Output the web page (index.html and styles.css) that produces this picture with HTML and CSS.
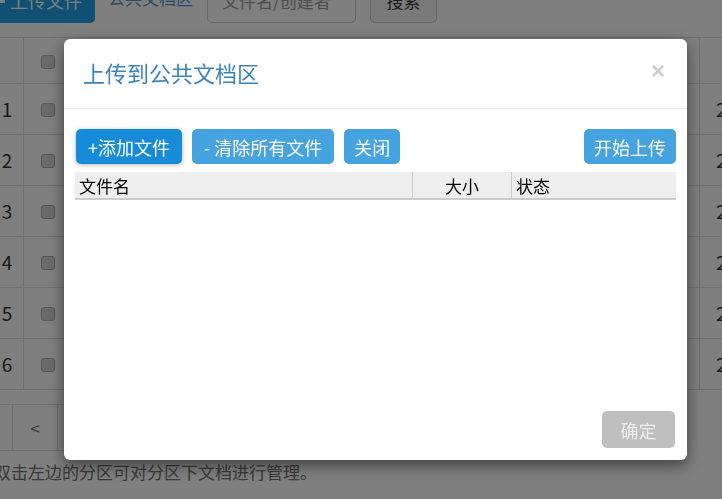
FILE: index.html
```html
<!DOCTYPE html>
<html lang="zh-CN">
<head>
    <meta charset="UTF-8">
    <meta name="viewport" content="width=device-width, initial-scale=1.0">
    <title>公共文档区</title>
    <link rel="stylesheet" href="styles.css">
</head>
<body>

<div class="page">
    <div class="toolbar">
        <button class="btn-upload"><span class="icon-up"></span>上传文件</button>
        <a class="area-link">公共文档区</a>
        <input class="search-input" type="text" placeholder="文件名/创建者">
        <button class="btn-search">搜索</button>
    </div>

    <table class="doc-table">
        <tr class="head-row">
            <td class="num"></td>
            <td class="chk"><span class="box"></span></td>
            <td class="name"></td>
            <td class="date"></td>
        </tr>
        <tr><td class="num">1</td><td class="chk"><span class="box"></span></td><td class="name"></td><td class="date">2020-03-12</td></tr>
        <tr><td class="num">2</td><td class="chk"><span class="box"></span></td><td class="name"></td><td class="date">2020-03-12</td></tr>
        <tr><td class="num">3</td><td class="chk"><span class="box"></span></td><td class="name"></td><td class="date">2020-03-11</td></tr>
        <tr><td class="num">4</td><td class="chk"><span class="box"></span></td><td class="name"></td><td class="date">2020-03-10</td></tr>
        <tr><td class="num">5</td><td class="chk"><span class="box"></span></td><td class="name"></td><td class="date">2020-03-09</td></tr>
        <tr><td class="num">6</td><td class="chk"><span class="box"></span></td><td class="name"></td><td class="date">2020-03-08</td></tr>
    </table>

    <div class="pager">
        <span class="pg">&laquo;</span>
        <span class="pg">&lt;</span>
        <span class="pg">1</span>
        <span class="pg">&gt;</span>
        <span class="pg">&raquo;</span>
    </div>

    <p class="tip">双击左边的分区可对分区下文档进行管理。</p>
</div>

<!-- upload dialog -->
<div class="backdrop"></div>
<div class="modal">
    <div class="modal-header">
        <h4 class="modal-title">上传到公共文档区</h4>
        <span class="close">&times;</span>
    </div>
    <div class="modal-body">
        <div class="actions">
            <button class="ubtn primary wide">+添加文件</button>
            <button class="ubtn wide">- 清除所有文件</button>
            <button class="ubtn">关闭</button>
            <button class="ubtn push">开始上传</button>
        </div>
        <table class="file-table">
            <tr>
                <th class="c-name">文件名</th>
                <th class="c-size">大小</th>
                <th class="c-state">状态</th>
            </tr>
        </table>
    </div>
    <div class="modal-footer">
        <button class="ok">确定</button>
    </div>
</div>

</body>
</html>
```

FILE: styles.css
```css
html, body {
    margin: 0;
    height: 100%;
    overflow: hidden;
}
body {
    font-family: "Noto Sans CJK SC", sans-serif;
    color: #333;
    background-color: #fff;
}
.page {
    width: 900px;
}

/* toolbar above the table */
.toolbar {
    display: flex;
    align-items: flex-start;
    height: 38px;
    margin: -15px 0 14px -10px;
}
.btn-upload {
    display: flex;
    align-items: center;
    box-sizing: border-box;
    width: 105px;
    height: 38px;
    padding: 0 0 8px 10px;
    background-color: #1fa0e6;
    color: #fff;
    font-family: inherit;
    font-size: 18px;
    border: none;
    border-radius: 5px;
}
.icon-up {
    width: 5px;
    height: 6px;
    background-color: #fff;
    margin-right: 5px;
}
.area-link {
    margin: 4px 0 0 13px;
    color: #4a9ad6;
    font-size: 17px;
    line-height: 18px;
}
.search-input {
    box-sizing: border-box;
    width: 149px;
    height: 38px;
    margin-left: 14px;
    padding: 0 14px 8px;
    font-family: inherit;
    font-size: 17px;
    border: 1px solid #ccc;
    border-radius: 5px;
}
.search-input::placeholder {
    color: #999;
}
.btn-search {
    box-sizing: border-box;
    width: 67px;
    height: 38px;
    margin-left: 14px;
    padding: 0 0 8px;
    background-color: #f4f4f4;
    color: #333;
    font-family: inherit;
    font-size: 17px;
    border: 1px solid #ccc;
    border-radius: 5px;
}

/* document table */
.doc-table {
    border-collapse: collapse;
    margin-left: -10px;
    table-layout: fixed;
    width: 900px;
}
.doc-table td {
    border: 1px solid #ddd;
    height: 50px;
    padding: 0;
    font-size: 19px;
    line-height: 24px;
    white-space: nowrap;
}
.doc-table .head-row td {
    height: 45px;
}
.doc-table .num {
    width: 32px;
    text-align: center;
}
.doc-table .chk {
    width: 47px;
    text-align: center;
}
.doc-table .name {
    width: 627px;
}
.doc-table .date {
    padding-left: 16px;
}
.box {
    display: inline-block;
    width: 12px;
    height: 12px;
    margin-top: 4px;
    background-color: #d4d4d4;
    border: 1px solid #aaa;
    border-radius: 3px;
}

.pager {
    display: flex;
    margin: 14px 0 0 -32px;
}
.pg {
    box-sizing: border-box;
    width: 46px;
    height: 47px;
    line-height: 45px;
    text-align: center;
    font-size: 17px;
    color: #777;
    border: 1px solid #ddd;
    margin-left: -1px;
}
.tip {
    margin: 9px 0 0 -6px;
    font-size: 17px;
    line-height: 24px;
    color: #737373;
}

/* modal */
.backdrop {
    position: fixed;
    top: 0;
    left: 0;
    right: 0;
    bottom: 0;
    background-color: rgba(0, 0, 0, 0.5);
}
.modal {
    position: fixed;
    left: 64px;
    top: 39px;
    width: 623px;
    height: 421px;
    display: flex;
    flex-direction: column;
    background-color: #fff;
    border-radius: 6px;
    box-shadow: 0 5px 15px rgba(0, 0, 0, 0.5);
}
.modal-header {
    display: flex;
    align-items: center;
    justify-content: space-between;
    height: 69px;
    padding: 0 22px 0 19px;
    border-bottom: 1px solid #e5e5e5;
}
.modal-title {
    margin: -4px 0 0;
    font-size: 22px;
    font-weight: normal;
    color: #3a84bd;
}
.close {
    font-family: "Liberation Sans", sans-serif;
    font-size: 24px;
    font-weight: bold;
    color: #cdcdcd;
    margin-top: -6px;
}
.modal-body {
    flex: 1;
    padding: 20px 11px 0;
}
.actions {
    display: flex;
    gap: 10px;
    margin-left: 1px;
    margin-bottom: 8px;
}
.ubtn {
    height: 35px;
    padding: 0 10px;
    background-color: #45a3df;
    color: #fff;
    font-family: inherit;
    font-size: 18px;
    border: none;
    border-radius: 5px;
}
.ubtn.wide {
    padding: 0 12px;
}
.ubtn.primary {
    background-color: #168cd8;
    box-shadow: 0 1px 5px rgba(0, 0, 0, 0.3);
}
.ubtn.push {
    margin-left: auto;
}
.file-table {
    width: 100%;
    border-collapse: collapse;
    table-layout: fixed;
}
.file-table th {
    height: 26px;
    padding: 0 4px;
    font-size: 17px;
    font-weight: normal;
    color: #000;
    background-color: #eee;
    border-bottom: 2px solid #ccc;
    text-align: left;
}
.file-table .c-name {
    width: 329px;
    border-right: 1px solid #ccc;
}
.file-table .c-size {
    width: 90px;
    text-align: center;
    border-right: 1px solid #ccc;
}
.modal-footer {
    display: flex;
    justify-content: flex-end;
    padding: 0 12px 12px;
}
.ok {
    width: 73px;
    height: 37px;
    background-color: #bfbfbf;
    color: #eee;
    font-family: inherit;
    font-size: 18px;
    border: none;
    border-radius: 5px;
}
```
